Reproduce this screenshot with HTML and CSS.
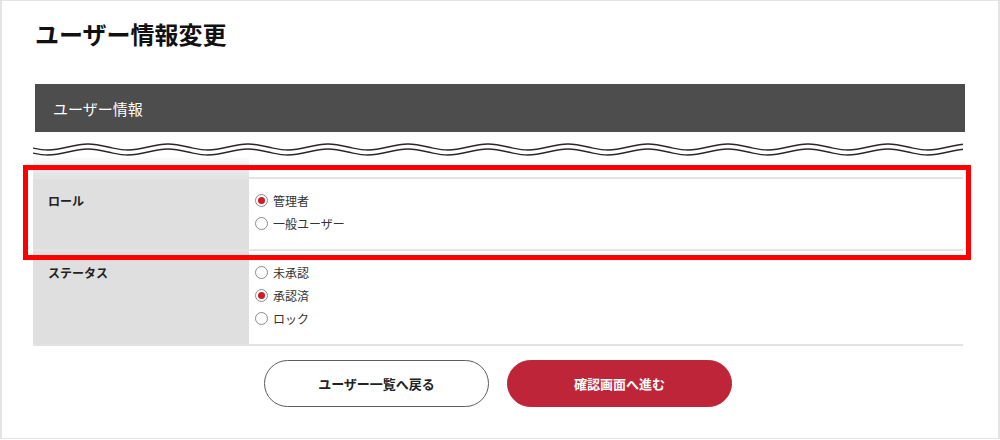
FILE: index.html
```html
<!DOCTYPE html>
<html lang="ja">
<head>
    <meta charset="UTF-8">
    <meta name="viewport" content="width=device-width, initial-scale=1.0">
    <title>ユーザー情報変更</title>
    <link rel="stylesheet" href="styles.css">
</head>
<body>
    <div class="page">
        <h1 class="page-title">ユーザー情報変更</h1>

        <div class="section-head">ユーザー情報</div>

        <div class="omit">
            <svg class="wave" width="930" height="18" viewBox="0 0 930 18">
                <defs>
                    <pattern id="wavePattern" patternUnits="userSpaceOnUse" width="80" height="18" x="0" y="0">
                        <path d="M-25,4 C-10,4 0,10 15,10 S40,4 55,4 S80,10 95,10 S120,4 135,4" fill="none" stroke="#2a2525" stroke-width="1.3"/>
                        <path d="M-25,9 C-10,9 0,15 15,15 S40,9 55,9 S80,15 95,15 S120,9 135,9" fill="none" stroke="#2a2525" stroke-width="1.3"/>
                    </pattern>
                </defs>
                <rect x="0" y="0" width="930" height="18" fill="url(#wavePattern)"/>
            </svg>
            <div class="fade">
                <div class="fade-label"></div>
                <div></div>
            </div>
        </div>

        <div class="form-table">
            <div class="form-row">
                <div class="form-label">ロール</div>
                <div class="form-field">
                    <label class="option"><input type="radio" class="radio" name="role" checked> 管理者</label>
                    <label class="option"><input type="radio" class="radio" name="role"> 一般ユーザー</label>
                </div>
            </div>
            <div class="form-row">
                <div class="form-label">ステータス</div>
                <div class="form-field">
                    <label class="option"><input type="radio" class="radio" name="status"> 未承認</label>
                    <label class="option"><input type="radio" class="radio" name="status" checked> 承認済</label>
                    <label class="option"><input type="radio" class="radio" name="status"> ロック</label>
                </div>
            </div>
        </div>

        <div class="actions">
            <button class="btn btn-back">ユーザー一覧へ戻る</button>
            <button class="btn btn-next">確認画面へ進む</button>
        </div>
    </div>

    <div class="highlight"></div>
</body>
</html>
```

FILE: styles.css
```css
body {
    margin: 0;
    font-family: "Noto Sans CJK JP", "Noto Sans", sans-serif;
    color: #222;
    background-color: #fff;
}
.page {
    box-sizing: border-box;
    width: 1000px;
    height: 439px;
    border: 1px solid #e4e4e4;
    border-width: 1px 2px;
    padding: 15px 35px 0 31px;
}
.page-title {
    margin: 0 0 0 2px;
    font-size: 24px;
    line-height: 36px;
    font-weight: bold;
    color: #111;
}
.section-head {
    display: flex;
    align-items: center;
    height: 48px;
    margin: 32px -2px 0 2px;
    padding: 0 18px;
    background-color: #4d4d4d;
    color: #fff;
    font-size: 15px;
}
.omit {
    padding-top: 8px;
}
.wave {
    display: block;
}
.fade {
    display: grid;
    grid-template-columns: 216px 1fr;
    height: 19px;
}
.fade-label {
    background: linear-gradient(#fafafa, #e2e2e2);
}
.form-table {
    border-bottom: 2px solid #e2e2e2;
}
.form-row {
    display: grid;
    grid-template-columns: 216px 1fr;
    border-top: 2px solid #e4e4e4;
}
.form-label {
    background-color: #dfdfdf;
    padding: 10px 15px 14px;
    font-size: 12px;
    line-height: 23px;
    font-weight: bold;
    color: #222;
}
.form-field {
    padding: 10px 6px 14px;
}
.option {
    display: flex;
    align-items: center;
    gap: 5px;
    height: 23px;
    font-size: 12px;
    color: #333;
}
.radio {
    appearance: none;
    -webkit-appearance: none;
    box-sizing: border-box;
    width: 13px;
    height: 13px;
    margin: 0;
    border: 1px solid #8c8c8c;
    border-radius: 50%;
    background-color: #fff;
    display: grid;
    place-items: center;
}
.radio:checked::after {
    content: "";
    width: 7px;
    height: 7px;
    border-radius: 50%;
    background-color: #d01c24;
}
.actions {
    display: flex;
    justify-content: center;
    gap: 18px;
    margin-top: 14px;
}
.btn {
    box-sizing: border-box;
    width: 225px;
    height: 47px;
    border-radius: 24px;
    font-family: inherit;
    font-size: 13px;
    font-weight: bold;
    cursor: pointer;
}
.btn-back {
    background-color: #fff;
    border: 1px solid #5c5c5c;
    color: #222;
}
.btn-next {
    background-color: #be2538;
    border: 1px solid #be2538;
    color: #fff;
}
.highlight {
    position: absolute;
    left: 23px;
    top: 165px;
    width: 948px;
    height: 95px;
    box-sizing: border-box;
    border: 5px solid #ff0000;
    pointer-events: none;
}
```
